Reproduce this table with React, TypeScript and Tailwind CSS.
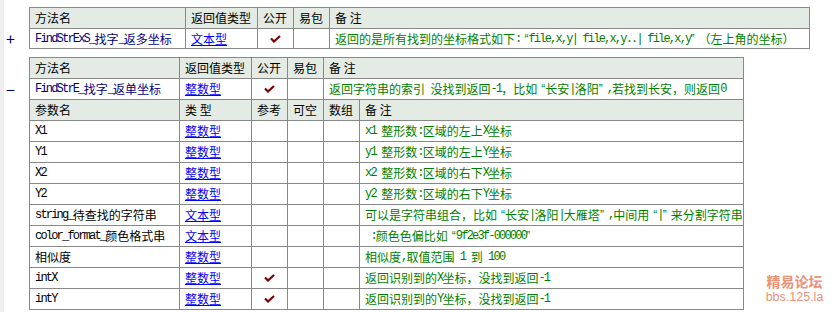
import React from 'react';

const CJK = '"Noto Sans CJK SC", "Liberation Sans", sans-serif';

// split a string into ascii runs (narrow mono), curly quotes (narrowed) and cjk runs
const Txt: React.FC<{ s: string }> = ({ s }) => {
  const parts = s.split(/([\x20-\x7e]+|[“”])/).filter((p) => p !== '');
  return (
    <>
      {parts.map((p, i) => {
        if (p === '“' || p === '”')
          return (
            <span
              key={i}
              className={`inline-block w-[8px] font-['Liberation_Sans',sans-serif] ${p === '“' ? 'text-right' : 'text-left'}`}
            >
              {p}
            </span>
          );
        if (/^[\x20-\x7e]+$/.test(p))
          return (
            <span
              key={i}
              className="whitespace-pre font-['Liberation_Mono',monospace] text-[12px] tracking-[-1.8px]"
            >
              {p}
            </span>
          );
        return <span key={i}>{p}</span>;
      })}
    </>
  );
};

const Check = () => (
  <svg width="11" height="8" viewBox="0 0 11 8">
    <polyline points="1,3.5 4,6.5 10,1" fill="none" stroke="#800000" strokeWidth="2.2" />
  </svg>
);

const cell = 'border-r border-b border-[#888] flex items-center overflow-hidden whitespace-nowrap';
const head = `${cell} bg-[#e4ebe4] pl-[5px] text-black`;

interface Param {
  name: string;
  type: string;
  ref?: boolean;
  note: string;
}

const params: Param[] = [
  { name: 'X1', type: '整数型', note: 'x1 整形数:区域的左上X坐标' },
  { name: 'Y1', type: '整数型', note: 'y1 整形数:区域的左上Y坐标' },
  { name: 'X2', type: '整数型', note: 'x2 整形数:区域的右下X坐标' },
  { name: 'Y2', type: '整数型', note: 'y2 整形数:区域的右下Y坐标' },
  { name: 'string_待查找的字符串', type: '文本型', note: '可以是字符串组合，比如“长安|洛阳|大雁塔”,中间用“|”来分割字符串' },
  { name: 'color_format_颜色格式串', type: '文本型', note: ' :颜色色偏比如“9f2e3f-000000”' },
  { name: '相似度', type: '整数型', note: '相似度,取值范围 1 到 100' },
  { name: 'intX', type: '整数型', ref: true, note: '返回识别到的X坐标，没找到返回-1' },
  { name: 'intY', type: '整数型', ref: true, note: '返回识别到的Y坐标，没找到返回-1' },
];

export default function App() {
  return (
    <div
      className="relative w-[837px] h-[312px] bg-white flex text-[12px] text-black overflow-hidden"
      style={{ fontFamily: CJK }}
    >
      <div className="w-[4px] h-full bg-[#eeeeee] shrink-0" />

      <div className="flex flex-col pt-[7px] gap-[8px]">
        {/* method 1 (collapsed) */}
        <div className="flex items-start">
          <div className="w-[25px] mt-[21px] h-[20px] flex items-center pl-[2px] text-[#000080] text-[16px] leading-none">
            +
          </div>
          <div className="grid grid-cols-[156px_72px_36px_36px_480px] border-l border-t border-[#888]">
            <div className={`${head} h-[21px]`}>方法名</div>
            <div className={`${head} h-[21px]`}>返回值类型</div>
            <div className={`${head} h-[21px]`}>公开</div>
            <div className={`${head} h-[21px]`}>易包</div>
            <div className={`${head} h-[21px]`}>备 注</div>

            <div className={`${cell} h-[20px] pl-[5px] text-[#000080]`}>
              <Txt s="FindStrExS_找字_返多坐标" />
            </div>
            <div className={`${cell} h-[20px] pl-[5px] text-[#0000ff] underline`}>文本型</div>
            <div className={`${cell} h-[20px] justify-center`}>
              <Check />
            </div>
            <div className={`${cell} h-[20px]`} />
            <div className={`${cell} h-[20px] pl-[5px] text-[#008000]`}>
              <Txt s="返回的是所有找到的坐标格式如下:“file,x,y| file,x,y..| file,x,y”（左上角的坐标）" />
            </div>
          </div>
        </div>

        {/* method 2 (expanded) */}
        <div className="flex items-start">
          <div className="w-[25px] mt-[21px] h-[21px] flex items-center pl-[2px] text-[#000080] text-[16px] leading-none">
            −
          </div>
          <div className="grid grid-cols-[150px_72px_36px_36px_36px_384px] border-l border-t border-[#888]">
            <div className={`${head} h-[21px]`}>方法名</div>
            <div className={`${head} h-[21px]`}>返回值类型</div>
            <div className={`${head} h-[21px]`}>公开</div>
            <div className={`${head} h-[21px]`}>易包</div>
            <div className={`${head} h-[21px] col-span-2`}>备 注</div>

            <div className={`${cell} h-[21px] pl-[5px] text-[#000080]`}>
              <Txt s="FindStrE_找字_返单坐标" />
            </div>
            <div className={`${cell} h-[21px] pl-[5px] text-[#0000ff] underline`}>整数型</div>
            <div className={`${cell} h-[21px] justify-center`}>
              <Check />
            </div>
            <div className={`${cell} h-[21px]`} />
            <div className={`${cell} h-[21px] col-span-2 pl-[5px] text-[#008000]`}>
              <Txt s="返回字符串的索引 没找到返回-1，比如“长安|洛阳”,若找到长安，则返回0" />
            </div>

            <div className={`${head} h-[21px]`}>参数名</div>
            <div className={`${head} h-[21px]`}>类 型</div>
            <div className={`${head} h-[21px]`}>参考</div>
            <div className={`${head} h-[21px]`}>可空</div>
            <div className={`${head} h-[21px]`}>数组</div>
            <div className={`${head} h-[21px]`}>备 注</div>

            {params.map((p) => (
              <React.Fragment key={p.name}>
                <div className={`${cell} h-[21px] pl-[5px]`}>
                  <Txt s={p.name} />
                </div>
                <div className={`${cell} h-[21px] pl-[5px] text-[#0000ff] underline`}>{p.type}</div>
                <div className={`${cell} h-[21px] justify-center`}>{p.ref && <Check />}</div>
                <div className={`${cell} h-[21px]`} />
                <div className={`${cell} h-[21px]`} />
                <div className={`${cell} h-[21px] pl-[5px] text-[#008000]`}>
                  <Txt s={p.note} />
                </div>
              </React.Fragment>
            ))}
          </div>
        </div>
      </div>

      {/* forum watermark */}
      <div className="absolute left-[766px] top-[272px] w-[57px] flex flex-col items-center text-[#e8866c] opacity-90">
        <span className="h-[18px] leading-[18px] text-[14px] font-bold">精易论坛</span>
        <span className="h-[15px] leading-[15px] text-[12.5px] font-['Liberation_Sans',sans-serif]">bbs.125.la</span>
      </div>
    </div>
  );
}
